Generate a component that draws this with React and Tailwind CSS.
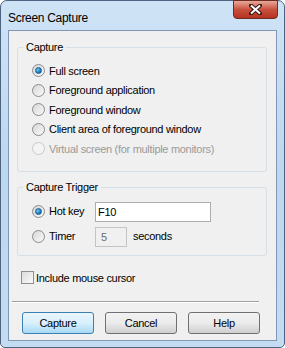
import React, { useState } from 'react'

const font = { fontFamily: '"Liberation Sans", Arial, sans-serif' }

function Radio({ checked, disabled, label, onClick }) {
  return (
    <div className="flex items-center h-[19.5px]" onClick={disabled ? undefined : onClick}>
      <span
        className={`w-[13px] h-[13px] rounded-full border flex items-center justify-center shrink-0 ${
          disabled
            ? 'border-[#c9c9c9] bg-[#f4f4f4]'
            : 'border-[#8b8b8b] bg-gradient-to-br from-[#d6d6d6] to-[#fafafa]'
        }`}
      >
        {checked && (
          <span className="w-[7px] h-[7px] rounded-full bg-[radial-gradient(circle_at_35%_35%,#6fd0f7,#1d76b8_60%,#0f4f8a)] border border-[#1d5f95]" />
        )}
      </span>
      <span className={`ml-[4px] ${disabled ? 'text-[#9a9a9a]' : 'text-black'}`}>{label}</span>
    </div>
  )
}

function Button({ children, primary }) {
  return (
    <button
      className={`w-[72px] h-[22px] rounded-[3px] border text-[11px] tracking-[-0.3px] text-black ${
        primary
          ? 'border-[#3c7fb1] bg-gradient-to-b from-[#eaf6fd] via-[#d9f0fc] to-[#a7d9f5]'
          : 'border-[#707070] bg-gradient-to-b from-[#f2f2f2] via-[#ebebeb] to-[#cfcfcf]'
      }`}
      style={font}
    >
      {children}
    </button>
  )
}

export default function App() {
  const [mode, setMode] = useState(0)
  const [trigger, setTrigger] = useState(0)

  const options = [
    'Full screen',
    'Foreground application',
    'Foreground window',
    'Client area of foreground window',
  ]

  return (
    <div
      className="w-[285px] h-[348px] flex flex-col rounded-t-[7px] rounded-b-[5px] border border-[#4d6380] bg-gradient-to-b from-[#cfe3f6] via-[#bcd7f0] to-[#c4dcf2] text-[11px] tracking-[-0.3px]"
      style={font}
    >
      {/* title bar */}
      <div className="h-[29px] flex items-start justify-between shrink-0">
        <div className="pl-[7px] pt-[8px] text-[12px] text-black">Screen Capture</div>
        <div className="mr-[6px] w-[45px] h-[19px] -mt-px rounded-b-[4px] border border-[#6b2c24] bg-gradient-to-b from-[#e8a89a] via-[#c7513e] to-[#b8321f] flex items-center justify-center">
          <svg width="13" height="11" viewBox="0 0 13 11">
            <path
              d="M2 1.5 L11 9.5 M11 1.5 L2 9.5"
              stroke="#3b1a15"
              strokeWidth="4"
              strokeLinecap="square"
            />
            <path d="M2 1.5 L11 9.5 M11 1.5 L2 9.5" stroke="#ffffff" strokeWidth="2" />
          </svg>
        </div>
      </div>

      {/* client area */}
      <div className="flex-1 mx-[7px] mb-[6px] border border-[#8197b4] bg-[#f0f0f0] flex flex-col">
        <fieldset className="ml-[8px] mr-[9px] mt-[9px] border border-[#d5dfe5] rounded-[3px] px-[14px] pb-[12px]">
          <legend className="-ml-[9px] px-[3px] leading-[15px]">Capture</legend>
          <div className="flex flex-col mt-[6px]">
            {options.map((o, i) => (
              <Radio key={o} label={o} checked={mode === i} onClick={() => setMode(i)} />
            ))}
            <Radio label="Virtual screen (for multiple monitors)" disabled />
          </div>
        </fieldset>

        <fieldset className="ml-[8px] mr-[9px] mt-[8px] border border-[#d5dfe5] rounded-[3px] px-[14px] pb-[8px]">
          <legend className="-ml-[9px] px-[3px] leading-[15px]">Capture Trigger</legend>
          <div className="flex flex-col gap-[5px] mt-[7px]">
            <div className="flex items-center h-[20px]">
              <div className="w-[63px]">
                <Radio label="Hot key" checked={trigger === 0} onClick={() => setTrigger(0)} />
              </div>
              <input
                defaultValue="F10"
                className="w-[116px] h-[20px] border border-[#abadb3] bg-white px-[2px] text-[11px] outline-none"
                style={font}
              />
            </div>
            <div className="flex items-center h-[20px]">
              <div className="w-[63px]">
                <Radio label="Timer" checked={trigger === 1} onClick={() => setTrigger(1)} />
              </div>
              <input
                defaultValue="5"
                disabled
                className="w-[32px] h-[20px] border border-[#c4c4c4] bg-[#f0f0f0] px-[5px] text-[11px] text-[#6d6d6d] outline-none"
                style={font}
              />
              <span className="ml-[6px]">seconds</span>
            </div>
          </div>
        </fieldset>

        <label className="flex items-center ml-[12px] mt-[14px]">
          <span className="w-[13px] h-[13px] border border-[#8e8f8f] bg-gradient-to-br from-[#dcdcdc] to-[#fbfbfb]" />
          <span className="ml-[2px]">Include mouse cursor</span>
        </label>

        <div className="ml-[3px] mr-[17px] mt-[15px] h-px bg-[#a0a0a0] border-b border-white box-content" />

        <div className="flex ml-[13px] mt-[9px] gap-[11px]">
          <Button primary>Capture</Button>
          <Button>Cancel</Button>
          <Button>Help</Button>
        </div>
      </div>
    </div>
  )
}
